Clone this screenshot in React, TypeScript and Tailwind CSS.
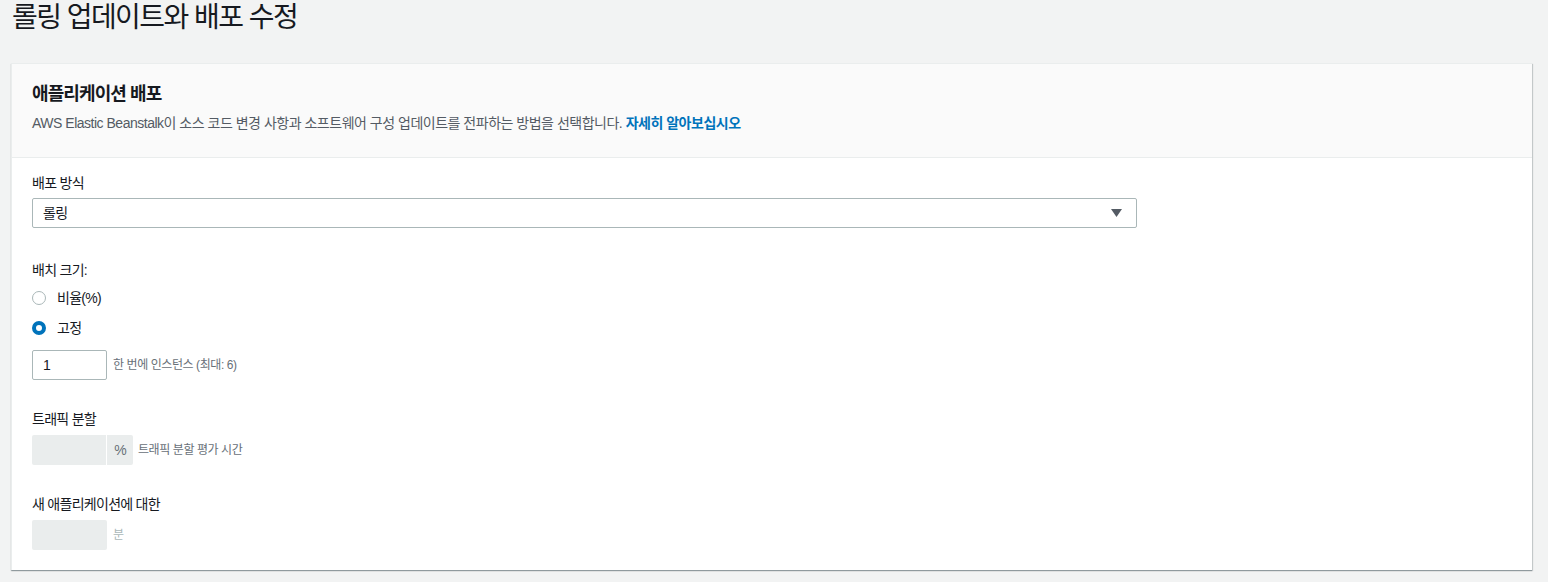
import React from 'react';

const font = { fontFamily: '"Liberation Sans", "Noto Sans CJK KR", sans-serif' };

function Radio({ checked, label }: { checked?: boolean; label: string }) {
  return (
    <label className="flex items-center h-[20px] text-[14px] text-[#16191f]">
      {checked ? (
        <span className="w-[14px] h-[14px] rounded-full border-[4px] border-[#0073bb] bg-white" />
      ) : (
        <span className="w-[14px] h-[14px] rounded-full border border-[#aab7b8] bg-white" />
      )}
      <span className="ml-[11px]">{label}</span>
    </label>
  );
}

export default function App() {
  return (
    <div className="h-[582px] w-[1548px] overflow-hidden bg-[#f2f3f3] tracking-[-0.045em]" style={font}>
      {/* Page title */}
      <div className="h-[63px] pl-[12px]">
        <h1 className="text-[28px] leading-[36px] text-[#16191f] font-normal tracking-[-0.055em]">롤링 업데이트와 배포 수정</h1>
      </div>

      {/* Card */}
      <div className="ml-[11px] w-[1521px] bg-white border-t border-l border-[#eaeded] shadow-[0_1px_1px_0_rgba(0,28,36,0.3),1px_1px_1px_0_rgba(0,28,36,0.15)]">
        <div className="h-[94px] bg-[#fafafa] border-b border-[#eaeded] px-[20px] pt-[19px]">
          <h2 className="text-[18px] leading-[22px] font-bold text-[#16191f] tracking-[-0.05em]">애플리케이션 배포</h2>
          <p className="mt-[8px] text-[14px] leading-[20px] text-[#545b64] tracking-[-0.035em]">
            AWS Elastic Beanstalk이 소스 코드 변경 사항과 소프트웨어 구성 업데이트를 전파하는 방법을 선택합니다.{' '}
            <a className="font-bold text-[#0073bb]">자세히 알아보십시오</a>
          </p>
        </div>

        <div className="px-[20px] pt-[15px] pb-[20px]">
          {/* Deployment method */}
          <div className="text-[14px] leading-[20px] text-[#16191f]">배포 방식</div>
          <div className="mt-[5px] w-[1105px] h-[30px] border border-[#aab7b8] rounded-[2px] flex items-center justify-between pl-[10px] pr-[14px]">
            <span className="text-[14px] text-[#16191f]">롤링</span>
            <svg width="11" height="8" viewBox="0 0 11 8">
              <path d="M0 0 L11 0 L5.5 8 Z" fill="#545b64" />
            </svg>
          </div>

          {/* Batch size */}
          <div className="mt-[32px] text-[14px] leading-[20px] text-[#16191f]">배치 크기:</div>
          <div className="mt-[8px] flex flex-col gap-[10px]">
            <Radio label="비율(%)" />
            <Radio checked label="고정" />
          </div>
          <div className="mt-[12px] flex items-center gap-[6px]">
            <div className="w-[75px] h-[30px] border border-[#aab7b8] rounded-[2px] flex items-center px-[10px] text-[14px] text-[#16191f]">1</div>
            <span className="text-[12px] text-[#687078] tracking-[-0.035em]">한 번에 인스턴스 (최대: 6)</span>
          </div>

          {/* Traffic split */}
          <div className="mt-[29px] text-[14px] leading-[20px] text-[#16191f]">트래픽 분할</div>
          <div className="mt-[6px] flex items-center">
            <div className="flex gap-px h-[30px]">
              <div className="w-[74px] bg-[#eaeded] rounded-l-[2px]" />
              <div className="w-[26px] bg-[#eaeded] rounded-r-[2px] flex items-center justify-center text-[14px] text-[#687078]">%</div>
            </div>
            <span className="ml-[5px] text-[12px] text-[#687078] tracking-[-0.035em]">트래픽 분할 평가 시간</span>
          </div>

          {/* New application */}
          <div className="mt-[29px] text-[14px] leading-[20px] text-[#16191f]">새 애플리케이션에 대한</div>
          <div className="mt-[6px] flex items-center">
            <div className="w-[75px] h-[30px] bg-[#eaeded] rounded-[2px]" />
            <span className="ml-[6px] text-[12px] text-[#aab7b8]">분</span>
          </div>
        </div>
      </div>
    </div>
  );
}
